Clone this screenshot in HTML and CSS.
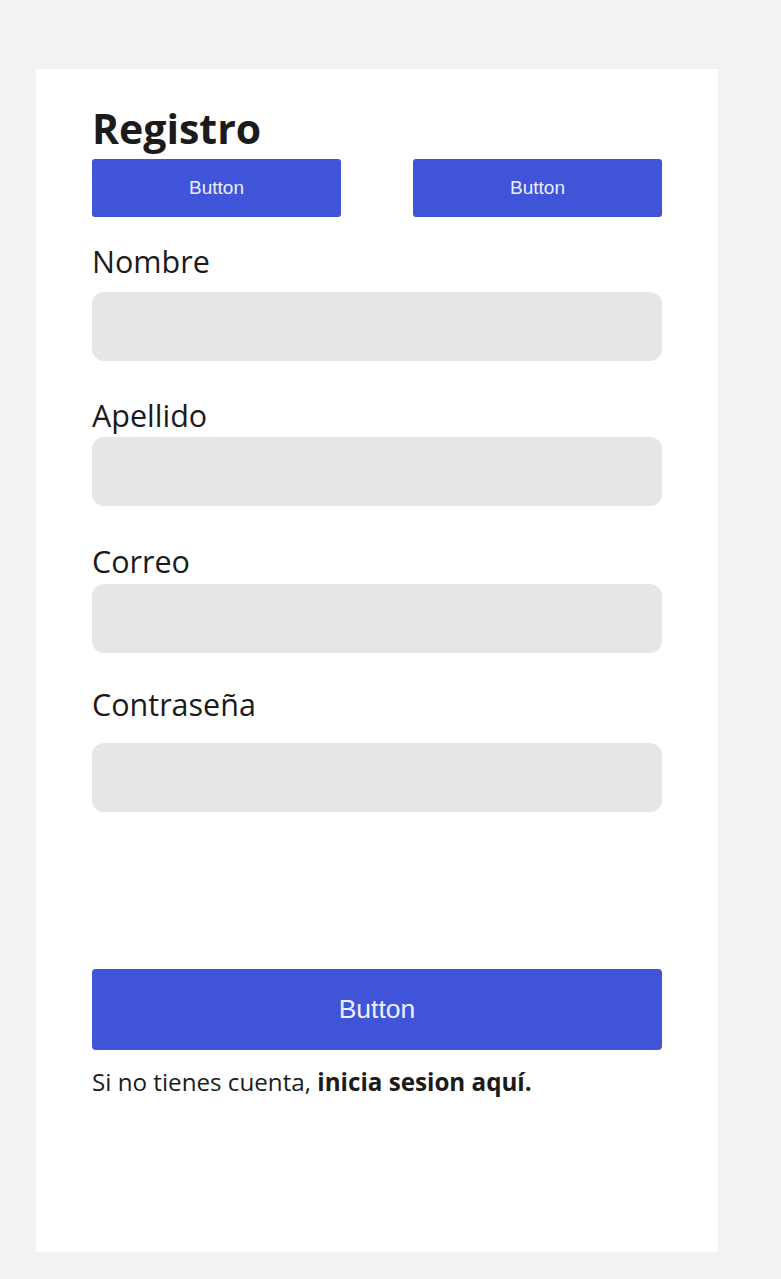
FILE: index.html
```html
<!DOCTYPE html>
<html lang="es">
<head>
<meta charset="utf-8">
<title>Registro</title>
<link rel="stylesheet" href="styles.css">
</head>
<body>
<main class="card">
  <h1 class="title">Registro</h1>
  <div class="top-buttons">
    <button class="btn btn-small">Button</button>
    <button class="btn btn-small">Button</button>
  </div>
  <label class="label label-nombre">Nombre</label>
  <div class="input input-nombre"></div>
  <label class="label label-apellido">Apellido</label>
  <div class="input input-apellido"></div>
  <label class="label label-correo">Correo</label>
  <div class="input input-correo"></div>
  <label class="label label-pass">Contraseña</label>
  <div class="input input-pass"></div>
  <button class="btn btn-big">Button</button>
  <p class="footer">Si no tienes cuenta, <strong>inicia sesion aquí.</strong></p>
</main>
</body>
</html>
```
FILE: styles.css
```css
html, body {
  margin: 0;
  padding: 0;
}
body {
  background: #f2f2f2;
  padding: 69px 0 0 36px;
  min-height: 1279px;
  box-sizing: border-box;
  font-family: "Open Sans", "Liberation Sans", sans-serif;
  color: #1b1b1b;
}
.card {
  width: 682px;
  height: 1183px;
  box-sizing: border-box;
  background: #ffffff;
  padding: 35px 56px 0 56px;
  display: flex;
  flex-direction: column;
}
.title {
  margin: 0;
  font-size: 41px;
  line-height: 48px;
  font-weight: 700;
}
.top-buttons {
  margin-top: 7px;
  display: flex;
  justify-content: space-between;
}
.btn {
  border: none;
  background: #3f54d9;
  color: #eceeff;
  font-family: "Liberation Sans", Arial, sans-serif;
  border-radius: 3px;
  padding: 0;
  cursor: pointer;
}
.btn-small {
  width: 249px;
  height: 58px;
  font-size: 19px;
}
.label {
  display: block;
  font-size: 30.5px;
  line-height: 36px;
}
.input {
  height: 69px;
  background: #e6e6e6;
  border-radius: 12px;
}
.label-nombre { margin-top: 26px; }
.input-nombre { margin-top: 13px; }
.label-apellido { margin-top: 36px; }
.input-apellido { margin-top: 4px; }
.label-correo { margin-top: 37px; }
.input-correo { margin-top: 5px; }
.label-pass { margin-top: 33px; }
.input-pass { margin-top: 21px; }
.btn-big {
  margin-top: 157px;
  height: 81px;
  width: 100%;
  font-size: 26.5px;
  border-radius: 4px;
}
.footer {
  margin: 16px 0 0 0;
  font-size: 24.2px;
  line-height: 32px;
}
.footer strong {
  font-weight: 700;
}
```
